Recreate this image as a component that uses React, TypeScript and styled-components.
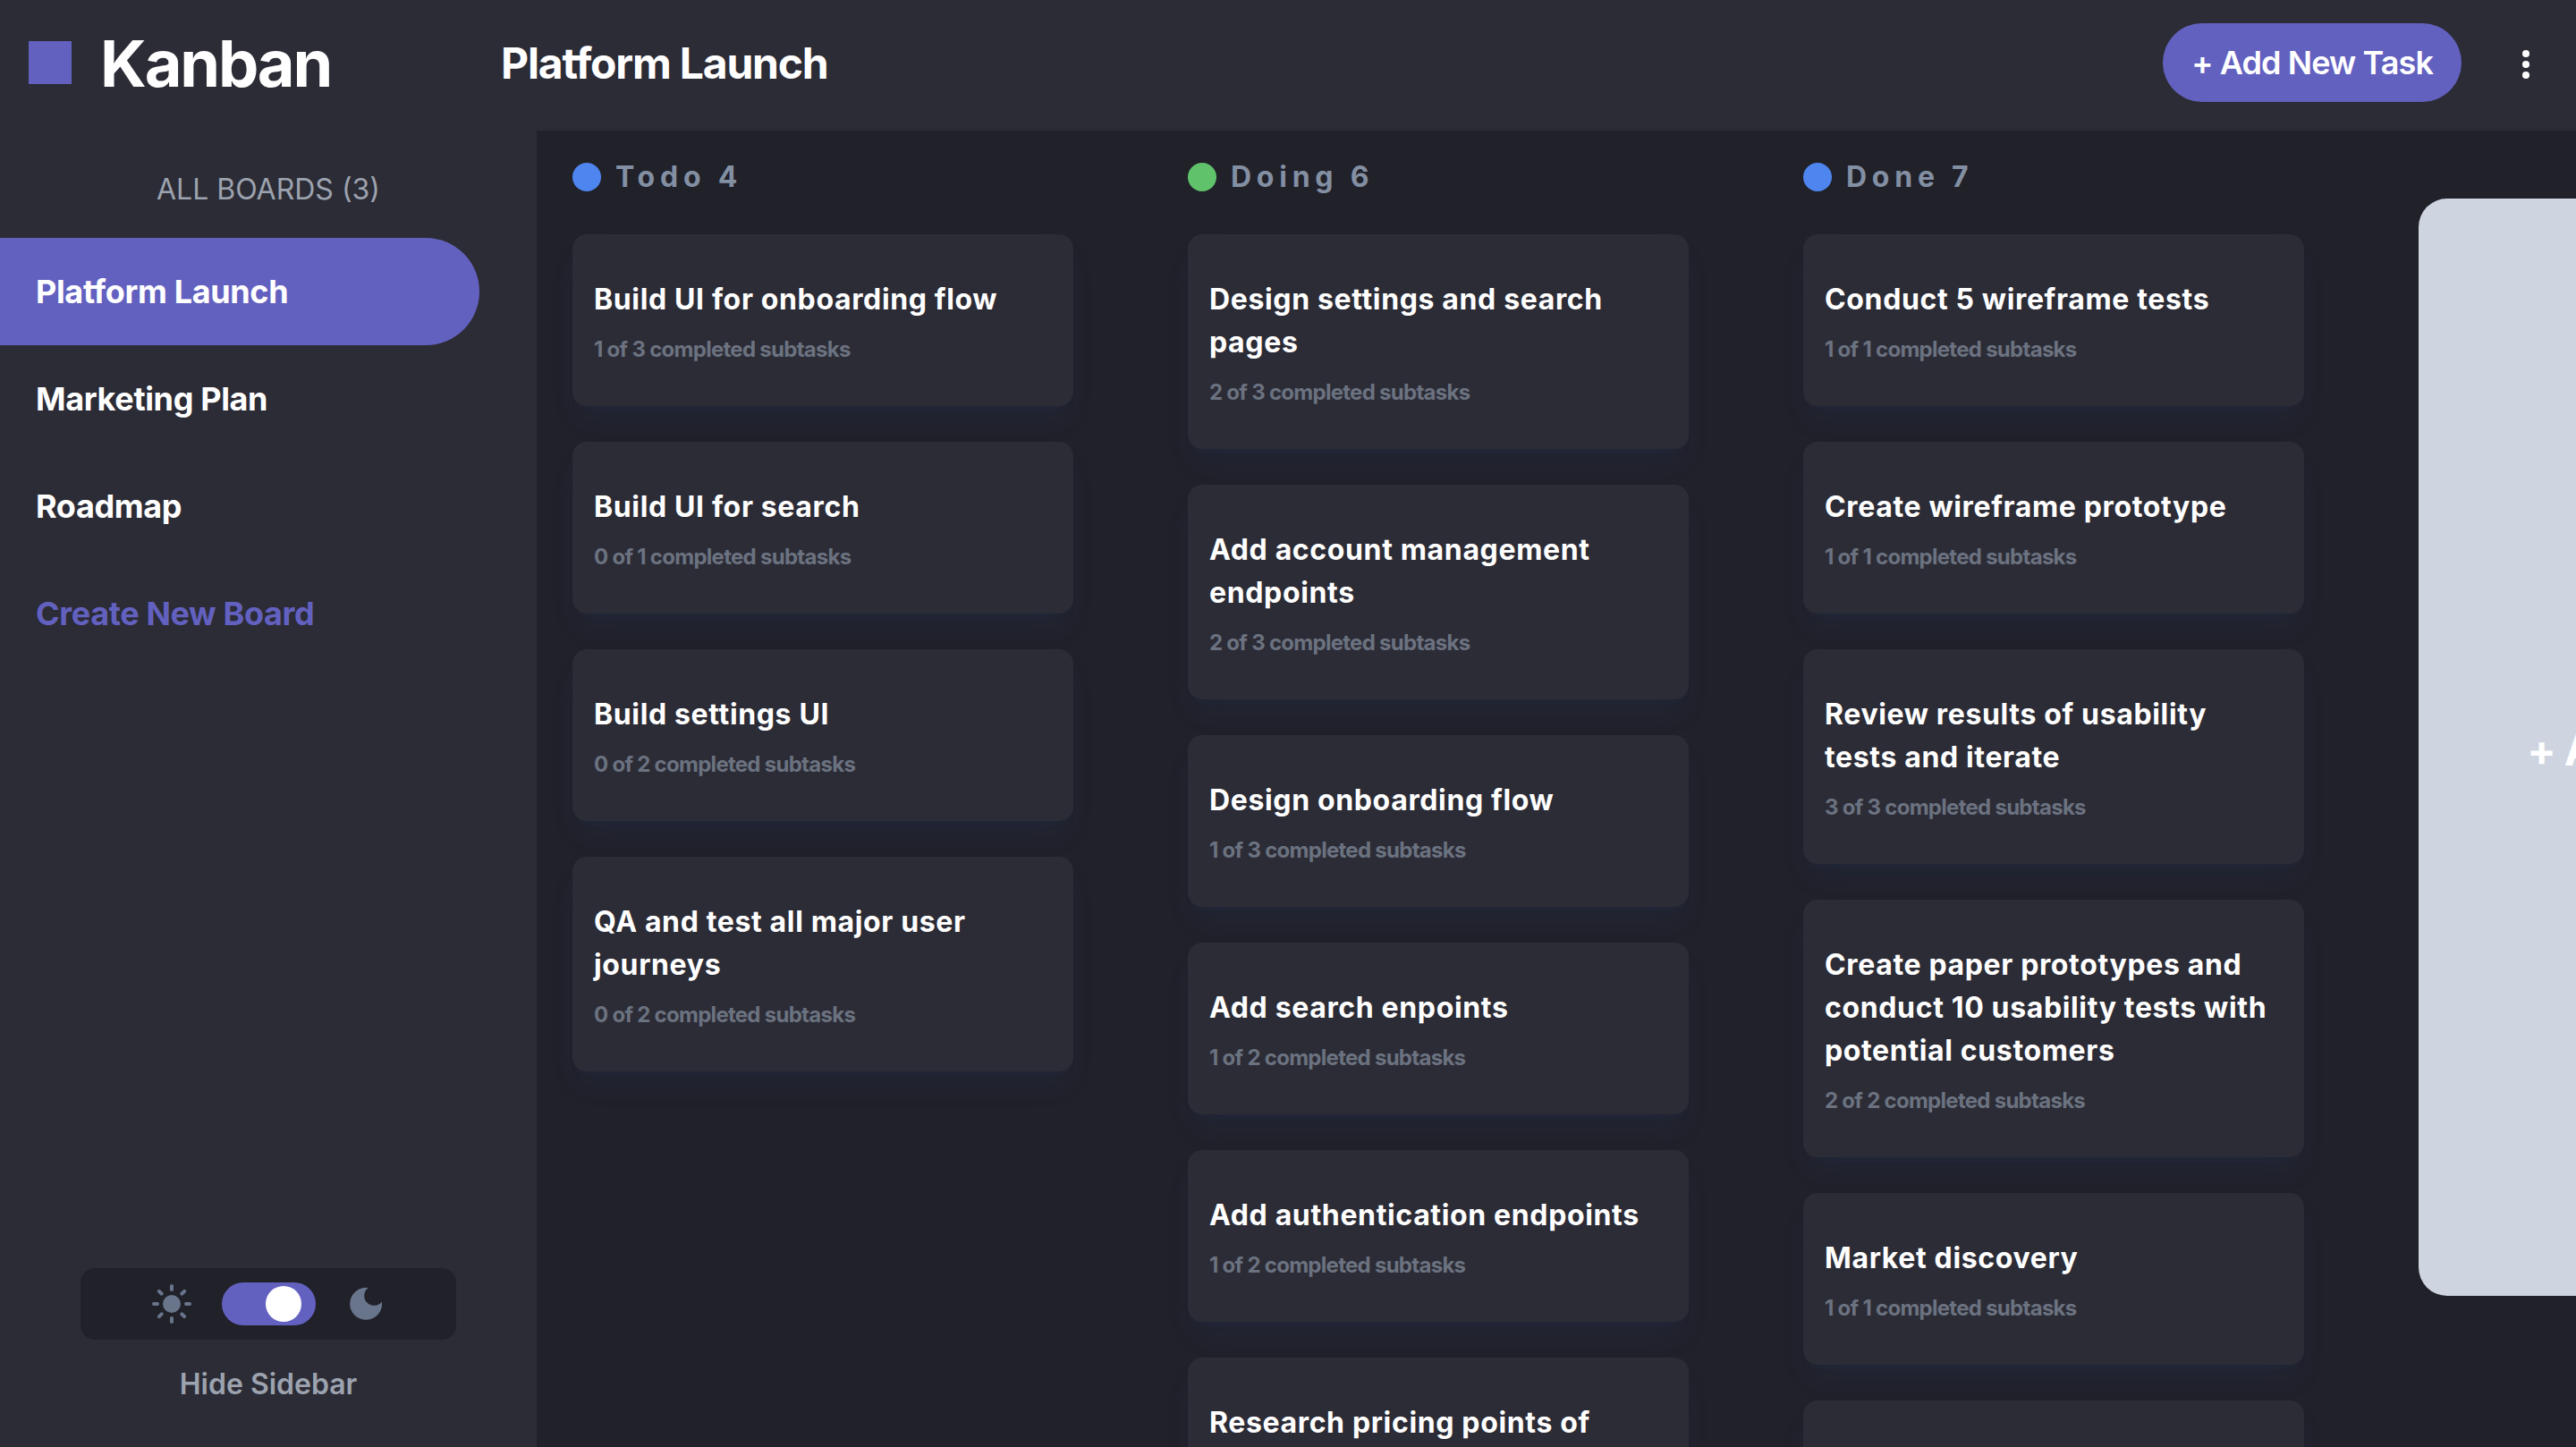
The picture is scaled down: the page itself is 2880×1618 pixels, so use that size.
import React, { useState } from "react";
import styled, { createGlobalStyle } from "styled-components";

const color = {
  surface: "#2c2c36",
  base: "#21212a",
  accent: "#6361c0",
  muted: "#838fa2",
  gray400: "#9ca3af",
  gray500: "#6b7280",
  slate: "#68758a",
};

const GlobalStyle = createGlobalStyle`
  *, *::before, *::after { box-sizing: border-box; }
  body {
    margin: 0;
    background: ${color.base};
    color: #fff;
    font-family: Inter, "Liberation Sans", sans-serif;
  }
  h1, h2, h3, p, ul { margin: 0; padding: 0; }
  ul { list-style: none; }
  button { border: 0; background: none; color: inherit; font: inherit; letter-spacing: inherit; cursor: pointer; }
`;

const Page = styled.div`
  display: flex;
  flex-direction: column;
  height: 100vh;
  overflow: hidden;
`;

const Header = styled.header`
  display: flex;
  align-items: center;
  flex: none;
  height: 146px;
  padding: 0 32px 6px;
  background: ${color.surface};
`;

const Brand = styled.div`
  display: flex;
  align-items: center;
  gap: 32px;
  width: 528px;
`;

const BrandMark = styled.span`
  width: 48px;
  height: 48px;
  background: ${color.accent};
`;

const BrandName = styled.h1`
  padding-top: 2px;
  font-size: 72px;
  line-height: 80px;
  font-weight: 700;
  letter-spacing: -0.03em;
`;

const BoardTitle = styled.h2`
  flex: 1;
  padding-top: 2px;
  font-size: 48px;
  line-height: 64px;
  font-weight: 700;
  letter-spacing: -0.025em;
`;

const AddTaskButton = styled.button`
  height: 88px;
  padding: 0 32px;
  border-radius: 44px;
  background: ${color.accent};
  font-size: 36px;
  line-height: 56px;
  font-weight: 600;
  letter-spacing: -0.025em;
`;

const MenuButton = styled.button`
  display: flex;
  margin-left: 48px;
  padding: 0;
`;

const Body = styled.div`
  display: flex;
  flex: 1;
  min-height: 0;
`;

const Sidebar = styled.aside`
  display: flex;
  flex-direction: column;
  flex: none;
  width: 600px;
  padding: 42px 0 46px;
  background: ${color.surface};
`;

const SidebarHeading = styled.h3`
  margin-bottom: 30px;
  color: ${color.gray400};
  font-size: 32px;
  line-height: 48px;
  font-weight: 400;
  text-align: center;
`;

const BoardLink = styled.button<{ $active?: boolean; $accent?: boolean }>`
  display: block;
  width: 536px;
  height: 120px;
  padding: 0 40px;
  border-radius: 0 60px 60px 0;
  background: ${(p) => (p.$active ? color.accent : "transparent")};
  color: ${(p) => (p.$accent ? color.accent : "#fff")};
  font-size: 36px;
  line-height: 56px;
  font-weight: 700;
  letter-spacing: -0.01em;
  text-align: left;
`;

const SidebarFooter = styled.div`
  display: flex;
  flex-direction: column;
  align-items: center;
  gap: 26px;
  margin-top: auto;
`;

const ThemeSwitcher = styled.div`
  display: flex;
  align-items: center;
  justify-content: center;
  gap: 32px;
  width: 420px;
  height: 80px;
  border-radius: 16px;
  background: ${color.base};
`;

const Switch = styled.input`
  appearance: none;
  display: flex;
  align-items: center;
  width: 105px;
  height: 48px;
  margin: 0;
  border-radius: 24px;
  background: ${color.accent};
  cursor: pointer;

  &::before {
    content: "";
    width: 40px;
    height: 40px;
    margin-left: 16px;
    border-radius: 50%;
    background: #fff;
  }
  &:checked::before { margin-left: 49px; }
`;

const HideButton = styled.button`
  padding: 0;
  color: ${color.gray400};
  font-size: 32px;
  line-height: 48px;
  font-weight: 600;
`;

const Board = styled.main`
  display: flex;
  align-items: flex-start;
  gap: 128px;
  flex: 1;
  min-width: 0;
  padding: 0 40px;
  overflow: auto;
  scrollbar-width: none;
`;

const Column = styled.section`
  flex: none;
  width: 560px;
  padding-top: 28px;
`;

const ColumnHeading = styled.h3`
  display: flex;
  align-items: center;
  gap: 16px;
  margin-bottom: 40px;
  color: ${color.muted};
  font-size: 32px;
  line-height: 48px;
  font-weight: 700;
  letter-spacing: 0.18em;
`;

const Dot = styled.span<{ $color: string }>`
  width: 32px;
  height: 32px;
  border-radius: 50%;
  background: ${(p) => p.$color};
`;

const CardList = styled.ul`
  display: grid;
  gap: 40px;
`;

const Card = styled.li`
  display: grid;
  gap: 16px;
  padding: 49px 24px 47px;
  border-radius: 16px;
  background: ${color.surface};
  box-shadow: 0 20px 30px -6px #2c4a801f, 0 8px 12px -8px #2c4a801f;
`;

const CardTitle = styled.p`
  font-size: 32px;
  line-height: 48px;
  font-weight: 700;
  letter-spacing: 0.02em;
`;

const CardMeta = styled.p`
  color: ${color.gray500};
  font-size: 24px;
  line-height: 32px;
  font-weight: 700;
  letter-spacing: -0.03em;
`;

const AddColumnButton = styled.button`
  flex: none;
  width: 560px;
  height: calc(100% * 5 / 6);
  margin-top: 76px;
  padding-top: 8px;
  border-radius: 32px;
  background: #ced5e0;
  font-size: 48px;
  line-height: 64px;
  font-weight: 700;
  letter-spacing: -0.025em;
`;

const SunIcon = () => (
  <svg width="48" height="48" viewBox="-24 -24 48 48" fill={color.slate} aria-hidden="true">
    <circle r="10" />
    {[0, 45, 90, 135, 180, 225, 270, 315].map((angle) => (
      <rect key={angle} x="-2" y="-22" width="4" height="8" rx="2" transform={`rotate(${angle})`} />
    ))}
  </svg>
);

const MoonIcon = () => (
  <svg width="48" height="48" viewBox="-24 -24 48 48" fill={color.slate} aria-hidden="true">
    <path d="M2.7 -18A18 18 0 1 0 18 -2.5A11 11 0 1 1 2.7 -18Z" />
  </svg>
);

const DotsIcon = () => (
  <svg width="48" height="52" viewBox="0 0 48 52" fill="#fff" aria-hidden="true">
    <circle cx="24" cy="16" r="4" />
    <circle cx="24" cy="28" r="4" />
    <circle cx="24" cy="40" r="4" />
  </svg>
);

type Task = { title: string; done: number; total: number };

const boards = ["Platform Launch", "Marketing Plan", "Roadmap"];

const columns: { name: string; color: string; tasks: Task[] }[] = [
  {
    name: "Todo",
    color: "#4e85ee",
    tasks: [
      { title: "Build UI for onboarding flow", done: 1, total: 3 },
      { title: "Build UI for search", done: 0, total: 1 },
      { title: "Build settings UI", done: 0, total: 2 },
      { title: "QA and test all major user journeys", done: 0, total: 2 },
    ],
  },
  {
    name: "Doing",
    color: "#60c36b",
    tasks: [
      { title: "Design settings and search pages", done: 2, total: 3 },
      { title: "Add account management endpoints", done: 2, total: 3 },
      { title: "Design onboarding flow", done: 1, total: 3 },
      { title: "Add search enpoints", done: 1, total: 2 },
      { title: "Add authentication endpoints", done: 1, total: 2 },
      { title: "Research pricing points of various competitors and trial different business models", done: 1, total: 3 },
    ],
  },
  {
    name: "Done",
    color: "#4e85ee",
    tasks: [
      { title: "Conduct 5 wireframe tests", done: 1, total: 1 },
      { title: "Create wireframe prototype", done: 1, total: 1 },
      { title: "Review results of usability tests and iterate", done: 3, total: 3 },
      { title: "Create paper prototypes and conduct 10 usability tests with potential customers", done: 2, total: 2 },
      { title: "Market discovery", done: 1, total: 1 },
      { title: "Competitor analysis", done: 2, total: 2 },
      { title: "Research the market", done: 2, total: 2 },
    ],
  },
];

export default function App() {
  const [active, setActive] = useState(boards[0]);
  const [dark, setDark] = useState(true);

  return (
    <>
      <GlobalStyle />
      <Page>
        <Header>
          <Brand>
            <BrandMark />
            <BrandName>Kanban</BrandName>
          </Brand>
          <BoardTitle>{active}</BoardTitle>
          <AddTaskButton>+ Add New Task</AddTaskButton>
          <MenuButton aria-label="Board menu">
            <DotsIcon />
          </MenuButton>
        </Header>
        <Body>
          <Sidebar>
            <SidebarHeading>ALL BOARDS ({boards.length})</SidebarHeading>
            <nav>
              {boards.map((name) => (
                <BoardLink key={name} $active={name === active} onClick={() => setActive(name)}>
                  {name}
                </BoardLink>
              ))}
              <BoardLink $accent>Create New Board</BoardLink>
            </nav>
            <SidebarFooter>
              <ThemeSwitcher>
                <SunIcon />
                <Switch
                  type="checkbox"
                  role="switch"
                  aria-label="Dark mode"
                  checked={dark}
                  onChange={(e) => setDark(e.target.checked)}
                />
                <MoonIcon />
              </ThemeSwitcher>
              <HideButton>Hide Sidebar</HideButton>
            </SidebarFooter>
          </Sidebar>
          <Board>
            {columns.map((column) => (
              <Column key={column.name}>
                <ColumnHeading>
                  <Dot $color={column.color} />
                  {column.name} {column.tasks.length}
                </ColumnHeading>
                <CardList>
                  {column.tasks.map((task) => (
                    <Card key={task.title}>
                      <CardTitle>{task.title}</CardTitle>
                      <CardMeta>
                        {task.done} of {task.total} completed subtasks
                      </CardMeta>
                    </Card>
                  ))}
                </CardList>
              </Column>
            ))}
            <AddColumnButton>+ Add Column</AddColumnButton>
          </Board>
        </Body>
      </Page>
    </>
  );
}
